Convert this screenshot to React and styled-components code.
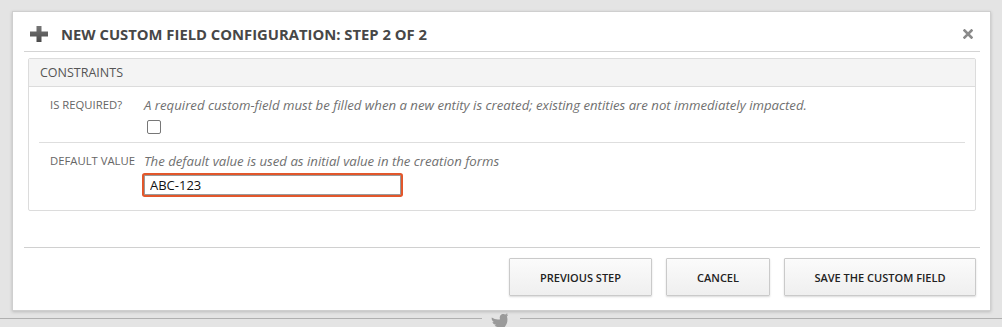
import React from "react";
import styled, { createGlobalStyle } from "styled-components";
import { FaTwitter } from "react-icons/fa";

const GlobalStyle = createGlobalStyle`
  html, body {
    margin: 0;
    padding: 0;
    background: #e4e4e4;
    font-family: "Open Sans", "Liberation Sans", sans-serif;
    overflow: hidden;
  }
`;

const Page = styled.div`
  width: 1002px;
  height: 327px;
  padding-top: 11px;
  box-sizing: border-box;
`;

const Modal = styled.div`
  margin: 0 11px 0 12px;
  height: 300px;
  box-sizing: border-box;
  background: #fff;
  border: 1px solid #cfcfcf;
  box-shadow: 0 1px 3px rgba(0, 0, 0, 0.18);
  padding: 0 10px 0 11px;
  display: flex;
  flex-direction: column;
`;

const Header = styled.div`
  height: 40px;
  box-sizing: border-box;
  display: flex;
  align-items: center;
  padding: 5px 7px 0 6px;
  border-bottom: 1px solid #d4d4d4;
`;

const Title = styled.h1`
  flex: 1;
  margin: 0 0 0 13px;
  font-size: 14.8px;
  font-weight: 700;
  color: #474747;
`;

const Body = styled.div`
  padding: 6px 4px 0;
  flex: 1;
`;

const Panel = styled.div`
  border: 1px solid #dcdcdc;
  border-radius: 2px;
`;

const PanelHeader = styled.div`
  height: 27px;
  display: flex;
  align-items: center;
  padding-left: 11px;
  background: #f4f4f4;
  border-bottom: 1px solid #dcdcdc;
  font-size: 12.5px;
  color: #555;
`;

const Row = styled.div`
  display: flex;
  margin: 0 10px;
  padding: ${(p) => p.$pad};
  border-bottom: ${(p) => (p.$last ? "none" : "1px solid #dedede")};
`;

const Label = styled.div`
  width: 105px;
  box-sizing: border-box;
  padding-left: 11px;
  flex-shrink: 0;
  font-size: 11.3px;
  color: #666;
  line-height: 18px;
`;

const Field = styled.div`
  display: flex;
  flex-direction: column;
  align-items: flex-start;
`;

const Hint = styled.div`
  font-size: 13.2px;
  font-style: italic;
  color: #707070;
  line-height: 18px;
`;

const Check = styled.input.attrs({ type: "checkbox" })`
  appearance: none;
  width: 14px;
  height: 14px;
  margin: 6px 0 0 3px;
  border: 1px solid #777;
  border-radius: 2px;
  background: #fff;
`;

const TextInput = styled.input`
  margin: 5px 0 0 0;
  width: 257px;
  height: 20px;
  box-sizing: border-box;
  border: 1px solid #9a9a9a;
  border-radius: 1px;
  box-shadow: 0 0 0 2px #e2572b;
  padding: 0 5px;
  font-family: "Open Sans", "Liberation Sans", sans-serif;
  font-size: 13px;
  color: #111;
  outline: none;
`;

const Footer = styled.div`
  border-top: 1px solid #d0d0d0;
  padding: 10px 4px 14px;
  display: flex;
  justify-content: flex-end;
  gap: 14px;
`;

const Button = styled.button`
  width: ${(p) => p.$w}px;
  height: 38px;
  border: 1px solid #cacaca;
  border-radius: 1px;
  background: linear-gradient(#fbfbfb, #efefef);
  box-shadow: 0 1px 2px rgba(0, 0, 0, 0.15);
  font-family: "Open Sans", "Liberation Sans", sans-serif;
  font-size: 11px;
  font-weight: 600;
  color: #222;
  text-transform: uppercase;
  padding: 0;
`;

const Bottom = styled.div`
  display: flex;
  align-items: center;
  height: 16px;
  margin-top: -1px;
`;

const Line = styled.div`
  height: 1px;
  background: #b0b0b0;
  flex: ${(p) => (p.$w ? `0 0 ${p.$w}px` : 1)};
`;

const Bird = styled.div`
  width: 38px;
  display: flex;
  justify-content: center;
  color: #9a9a9a;
  margin-top: 8px;
  transform: rotate(-15deg);
`;

const PlusIcon = () => (
  <svg width="18" height="16" viewBox="0 0 18 16">
    <defs>
      <linearGradient id="pg" x1="0" y1="0" x2="0" y2="1">
        <stop offset="0" stopColor="#777" />
        <stop offset="1" stopColor="#4a4a4a" />
      </linearGradient>
    </defs>
    <path d="M6.5 0h5v5.5H18v5h-6.5V16h-5v-5.5H0v-5h6.5z" fill="url(#pg)" />
  </svg>
);

const CloseIcon = () => (
  <svg width="10" height="10" viewBox="0 0 10 10">
    <path d="M1.5 1.5l7 7M8.5 1.5l-7 7" stroke="#8a8a8a" strokeWidth="2.6" strokeLinecap="square" />
  </svg>
);

export default function App() {
  return (
    <Page>
      <GlobalStyle />
      <Modal>
        <Header>
          <PlusIcon />
          <Title>NEW CUSTOM FIELD CONFIGURATION: STEP 2 OF 2</Title>
          <CloseIcon />
        </Header>
        <Body>
          <Panel>
            <PanelHeader>CONSTRAINTS</PanelHeader>
            <Row $pad="9px 0 8px">
              <Label>IS REQUIRED?</Label>
              <Field>
                <Hint>
                  A required custom-field must be filled when a new entity is created; existing
                  entities are not immediately impacted.
                </Hint>
                <Check />
              </Field>
            </Row>
            <Row $pad="9px 0 15px" $last>
              <Label>DEFAULT VALUE</Label>
              <Field>
                <Hint>The default value is used as initial value in the creation forms</Hint>
                <TextInput defaultValue="ABC-123" />
              </Field>
            </Row>
          </Panel>
        </Body>
        <Footer>
          <Button $w={143}>Previous step</Button>
          <Button $w={104}>Cancel</Button>
          <Button $w={192}>Save the custom field</Button>
        </Footer>
      </Modal>
      <Bottom>
        <Line $w={482} />
        <Bird>
          <FaTwitter size={18} />
        </Bird>
        <Line />
      </Bottom>
    </Page>
  );
}
